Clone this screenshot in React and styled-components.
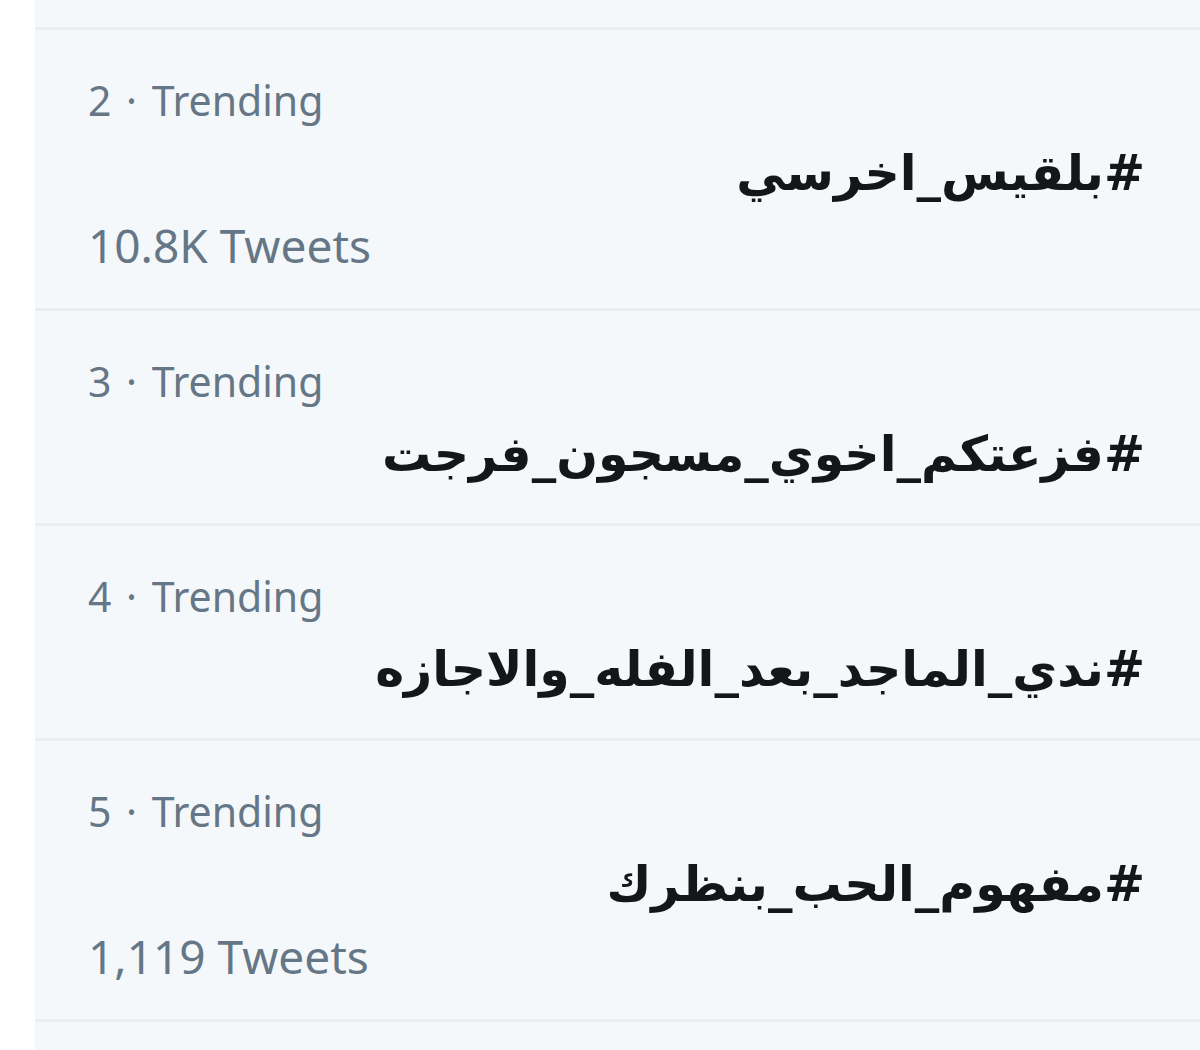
import React from "react";
import styled, { createGlobalStyle } from "styled-components";

const Global = createGlobalStyle`
  html, body { margin: 0; padding: 0; background: #ffffff; }
  body { font-family: "Noto Sans", "DejaVu Sans", sans-serif; }
`;

const Page = styled.div`
  padding-left: 35px;
  height: 1050px;
  overflow: hidden;
`;

const Panel = styled.section`
  background: #f5f8fa;
  min-height: 1050px;
`;

const TopStub = styled.div`
  height: 27px;
  border-bottom: 3px solid #e8edf1;
`;

const Row = styled.div`
  display: flex;
  flex-direction: column;
  padding: 34px 55px 30px 53px;
  border-bottom: 3px solid #e8edf1;
`;

const Meta = styled.div`
  font-family: "Noto Sans", sans-serif;
  font-size: 41px;
  line-height: 72px;
  word-spacing: 4px;
  color: #657786;
  white-space: nowrap;
`;

const Tag = styled.div`
  direction: rtl;
  text-align: right;
  font-family: "DejaVu Sans", sans-serif;
  font-weight: bold;
  font-size: 49px;
  line-height: 76px;
  color: #14171a;
  white-space: nowrap;
`;

const Count = styled.div`
  font-family: "Noto Sans", sans-serif;
  font-size: 46px;
  line-height: 66px;
  color: #657786;
  white-space: nowrap;
`;

const trends = [
  { rank: 2, tag: "#بلقيس_اخرسي", count: "10.8K Tweets" },
  { rank: 3, tag: "#فزعتكم_اخوي_مسجون_فرجت" },
  { rank: 4, tag: "#ندي_الماجد_بعد_الفله_والاجازه" },
  { rank: 5, tag: "#مفهوم_الحب_بنظرك", count: "1,119 Tweets" },
];

export default function App() {
  return (
    <>
      <Global />
      <Page>
        <Panel>
          <TopStub />
          {trends.map((t) => (
            <Row key={t.rank}>
              <Meta>{t.rank} · Trending</Meta>
              <Tag>{t.tag}</Tag>
              {t.count && <Count>{t.count}</Count>}
            </Row>
          ))}
        </Panel>
      </Page>
    </>
  );
}
